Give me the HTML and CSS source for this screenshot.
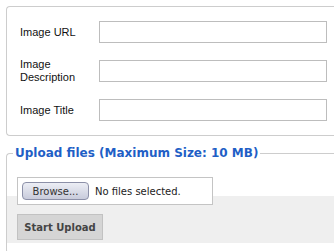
FILE: index.html
```html
<!DOCTYPE html>
<html lang="en">
<head>
    <meta charset="UTF-8">
    <meta name="viewport" content="width=device-width, initial-scale=1.0">
    <title>Image Upload</title>
    <link rel="stylesheet" href="styles.css">
</head>
<body>

    <!-- Image details -->
    <fieldset class="details">
        <div class="details-grid">
            <label for="image-url">Image URL</label>
            <input type="text" id="image-url">

            <label for="image-desc">Image Description</label>
            <input type="text" id="image-desc">

            <label for="image-title">Image Title</label>
            <input type="text" id="image-title">
        </div>
    </fieldset>

    <!-- Upload box -->
    <fieldset class="upload">
        <legend>Upload files (Maximum Size: 10 MB)</legend>
        <div class="file-row">
            <div class="file-box">
                <button type="button" class="browse-btn">Browse...</button>
                <span class="file-status">No files selected.</span>
            </div>
        </div>
        <div class="upload-actions">
            <button type="button" class="start-btn">Start Upload</button>
        </div>
    </fieldset>

</body>
</html>
```

FILE: styles.css
```css
body {
    margin: 0;
    padding: 6px 0 0 6px;
    font-family: "Liberation Sans", Arial, sans-serif;
    background-color: white;
}
fieldset {
    margin: 0;
    min-width: 0;
    border: 1px solid #cdcdcd;
    border-right: none;
    border-radius: 4px 0 0 4px;
}
/* Image details */
.details {
    padding: 14px 0 14px 13px;
}
.details-grid {
    display: grid;
    grid-template-columns: 79px 228px;
    row-gap: 15px;
    align-items: center;
}
.details-grid label {
    font-size: 11px;
    line-height: 13px;
    color: #111;
    padding-right: 6px;
}
.details-grid input {
    box-sizing: border-box;
    width: 228px;
    height: 22px;
    margin: 0;
    border: 1px solid #bdbdbd;
    background-color: white;
}
/* Upload box */
.upload {
    margin-top: 10px;
    padding: 0;
}
.upload legend {
    margin-left: 6px;
    padding: 0 2px;
    font-family: "DejaVu Sans", Verdana, sans-serif;
    font-size: 12px;
    font-weight: bold;
    line-height: 15px;
    color: #1f5fc6;
}
.file-row {
    padding: 16px 10px 0;
}
.file-box {
    position: relative;
    box-sizing: border-box;
    width: 196px;
    height: 28px;
    margin-bottom: -9px;
    padding: 4px;
    display: flex;
    align-items: center;
    gap: 6px;
    border: 1px solid #c4c4c4;
    background-color: white;
    font-family: "DejaVu Sans", Verdana, sans-serif;
    font-size: 10px;
    color: #222;
}
.browse-btn {
    box-sizing: border-box;
    width: 67px;
    height: 18px;
    padding: 0;
    border: 1px solid #8c90a8;
    border-radius: 4px;
    background: linear-gradient(#eceef5, #c8cbdb);
    font-family: "DejaVu Sans", Verdana, sans-serif;
    font-size: 10px;
    color: #333;
}
.upload-actions {
    background-color: #efefef;
    padding: 18px 10px 3px;
    margin-bottom: 10px;
}
.start-btn {
    box-sizing: border-box;
    width: 86px;
    height: 26px;
    padding: 0;
    border: 1px solid #c2c2c2;
    background-color: #d5d5d5;
    font-family: "DejaVu Sans", Verdana, sans-serif;
    font-size: 10px;
    font-weight: bold;
    color: #444;
}
```
